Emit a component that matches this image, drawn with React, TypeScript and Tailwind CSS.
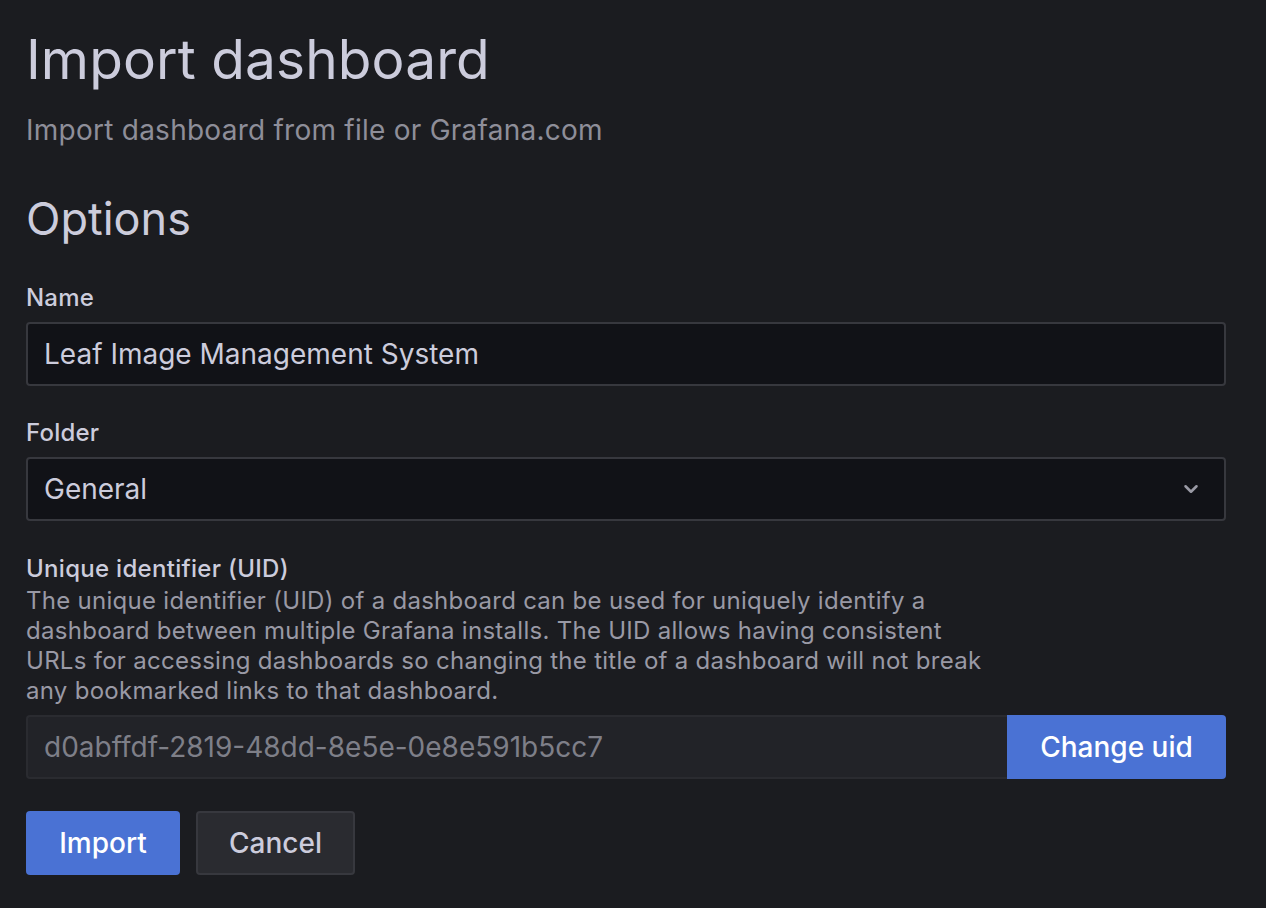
import React from "react";

export default function App() {
  const font = { fontFamily: "Inter, 'Noto Sans', sans-serif" };
  return (
    <div
      className="w-[1266px] h-[908px] bg-[#1b1c20] text-[#ccccdc] overflow-hidden"
      style={font}
    >
      <div className="pl-[26px] pr-[40px] pt-[26px]">
        <h1 className="text-[55px] leading-[67px] tracking-[0.1px] font-normal">Import dashboard</h1>
        <p className="mt-[20px] text-[28px] leading-[34px] tracking-[0.25px] text-[#8e8e99]">
          Import dashboard from file or Grafana.com
        </p>
        <h2 className="mt-[44px] text-[45px] leading-[56px] font-normal">Options</h2>

        <div className="mt-[36px]">
          <div className="text-[24px] leading-[30px] tracking-[0.2px] font-medium">Name</div>
          <div className="mt-[9px] h-[64px] rounded-[4px] border-2 border-[#37383e] bg-[#111217] flex items-center px-[16px] text-[28px]">
            Leaf Image Management System
          </div>
        </div>

        <div className="mt-[32px]">
          <div className="text-[24px] leading-[30px] tracking-[0.2px] font-medium">Folder</div>
          <div className="mt-[9px] h-[64px] rounded-[4px] border-2 border-[#37383e] bg-[#111217] flex items-center justify-between px-[16px] text-[28px]">
            <span>General</span>
            <svg width="22" height="22" viewBox="0 0 24 24" className="mr-[6px]">
              <path d="M6 9l6 6 6-6" fill="none" stroke="#9a9aa5" strokeWidth="2.8" strokeLinecap="round" strokeLinejoin="round" />
            </svg>
          </div>
        </div>

        <div className="mt-[33px]">
          <div className="text-[24px] leading-[30px] tracking-[0.3px] font-medium">Unique identifier (UID)</div>
          <div className="mt-[2px] text-[24px] leading-[30px] tracking-[0.28px] text-[#9999a5]">
            The unique identifier (UID) of a dashboard can be used for uniquely identify a
            <br />
            dashboard between multiple Grafana installs. The UID allows having consistent
            <br />
            URLs for accessing dashboards so changing the title of a dashboard will not break
            <br />
            any bookmarked links to that dashboard.
          </div>
          <div className="mt-[9px] flex h-[64px]">
            <div className="flex-1 rounded-l-[4px] border-2 border-r-0 border-[#2a2b30] bg-[#222328] flex items-center px-[16px] text-[28px] text-[#7e7f88]">
              d0abffdf-2819-48dd-8e5e-0e8e591b5cc7
            </div>
            <button className="w-[219px] rounded-r-[4px] bg-[#4a72d4] text-white text-[28px] font-medium">
              Change uid
            </button>
          </div>
        </div>

        <div className="mt-[32px] flex gap-[16px]">
          <button className="h-[64px] w-[154px] rounded-[4px] bg-[#4a72d4] text-white text-[28px] font-medium">
            Import
          </button>
          <button className="h-[64px] w-[159px] rounded-[4px] bg-[#2a2b30] border-2 border-[#37383e] text-[#ccccdc] text-[28px] font-medium">
            Cancel
          </button>
        </div>
      </div>
    </div>
  );
}
